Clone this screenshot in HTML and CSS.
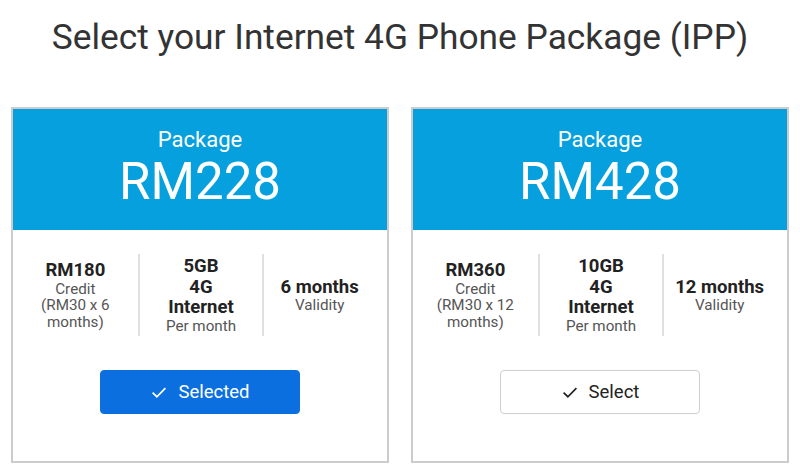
FILE: index.html
```html
<!DOCTYPE html>
<html lang="en">
<head>
   <meta charset="UTF-8">
   <meta name="viewport" content="width=device-width, initial-scale=1.0">
   <title>Internet 4G Phone Package</title>
   <link rel="stylesheet" href="styles.css">
</head>
<body>
    <h1 class="title">Select your Internet 4G Phone Package (IPP)</h1>

    <div class="packages">
        <div class="card">
            <div class="card-head">
                <div class="label">Package</div>
                <div class="price">RM228</div>
            </div>
            <div class="card-body">
                <div class="specs">
                    <div class="spec">
                        <strong>RM180</strong>
                        <span>Credit<br>(RM30 x 6<br>months)</span>
                    </div>
                    <div class="spec">
                        <strong>5GB<br>4G<br>Internet</strong>
                        <span>Per month</span>
                    </div>
                    <div class="spec">
                        <strong>6 months</strong>
                        <span>Validity</span>
                    </div>
                </div>
                <button class="btn selected">
                    <svg viewBox="0 0 16 16" width="18" height="18"><path d="M2.3 8.6 L6.1 12.2 L13.7 4.6" fill="none" stroke="currentColor" stroke-width="1.5"/></svg>
                    Selected
                </button>
            </div>
        </div>

        <div class="card">
            <div class="card-head">
                <div class="label">Package</div>
                <div class="price">RM428</div>
            </div>
            <div class="card-body">
                <div class="specs">
                    <div class="spec">
                        <strong>RM360</strong>
                        <span>Credit<br>(RM30 x 12<br>months)</span>
                    </div>
                    <div class="spec">
                        <strong>10GB<br>4G<br>Internet</strong>
                        <span>Per month</span>
                    </div>
                    <div class="spec">
                        <strong>12 months</strong>
                        <span>Validity</span>
                    </div>
                </div>
                <button class="btn">
                    <svg viewBox="0 0 16 16" width="18" height="18"><path d="M2.3 8.6 L6.1 12.2 L13.7 4.6" fill="none" stroke="currentColor" stroke-width="1.5"/></svg>
                    Select
                </button>
            </div>
        </div>
    </div>
</body>
</html>
```

FILE: styles.css
```css
* {
    margin: 0;
    padding: 0;
    box-sizing: border-box;
    font-family: Roboto, 'Liberation Sans', sans-serif;
}

body {
    background: #ffffff;
    width: 800px;
}

.title {
    font-size: 35.3px;
    font-weight: 400;
    color: #333333;
    text-align: center;
    line-height: 40px;
    padding-top: 17px;
    height: 107px;
}

.packages {
    display: flex;
    gap: 22px;
    padding: 0 11px;
}

.card {
    width: 378px;
    height: 356px;
    border: 2px solid #cccccc;
    display: flex;
    flex-direction: column;
}

.card-head {
    background: #05a0dd;
    color: #ffffff;
    text-align: center;
    height: 121px;
    padding-top: 17px;
}

.label {
    font-size: 22px;
    line-height: 28px;
}

.price {
    font-size: 51px;
    line-height: 56px;
}

.card-body {
    flex: 1;
    display: flex;
    flex-direction: column;
    align-items: center;
    padding-top: 24px;
}

.specs {
    display: flex;
    width: 100%;
    height: 82px;
    align-items: center;
}

.spec {
    flex: 0 0 33.333%;
    height: 100%;
    display: flex;
    flex-direction: column;
    justify-content: center;
    align-items: center;
    text-align: center;
    border-left: 2px solid #e0e0e0;
}

.spec:first-child {
    border-left: none;
}

.spec:last-child {
    padding-right: 12px;
}

.spec strong {
    font-size: 18.5px;
    line-height: 20.5px;
    font-weight: 700;
    color: #222222;
}

.spec span {
    font-size: 15.2px;
    line-height: 16.5px;
    color: #555555;
}

.btn {
    margin-top: 34px;
    width: 200px;
    height: 44px;
    border-radius: 4px;
    border: 1px solid #cfcfcf;
    background: #ffffff;
    color: #222222;
    font-size: 18.5px;
    display: flex;
    align-items: center;
    justify-content: center;
    gap: 10px;
    cursor: pointer;
}

.btn.selected {
    background: #0b6fdf;
    border-color: #0b6fdf;
    color: #ffffff;
}
```
